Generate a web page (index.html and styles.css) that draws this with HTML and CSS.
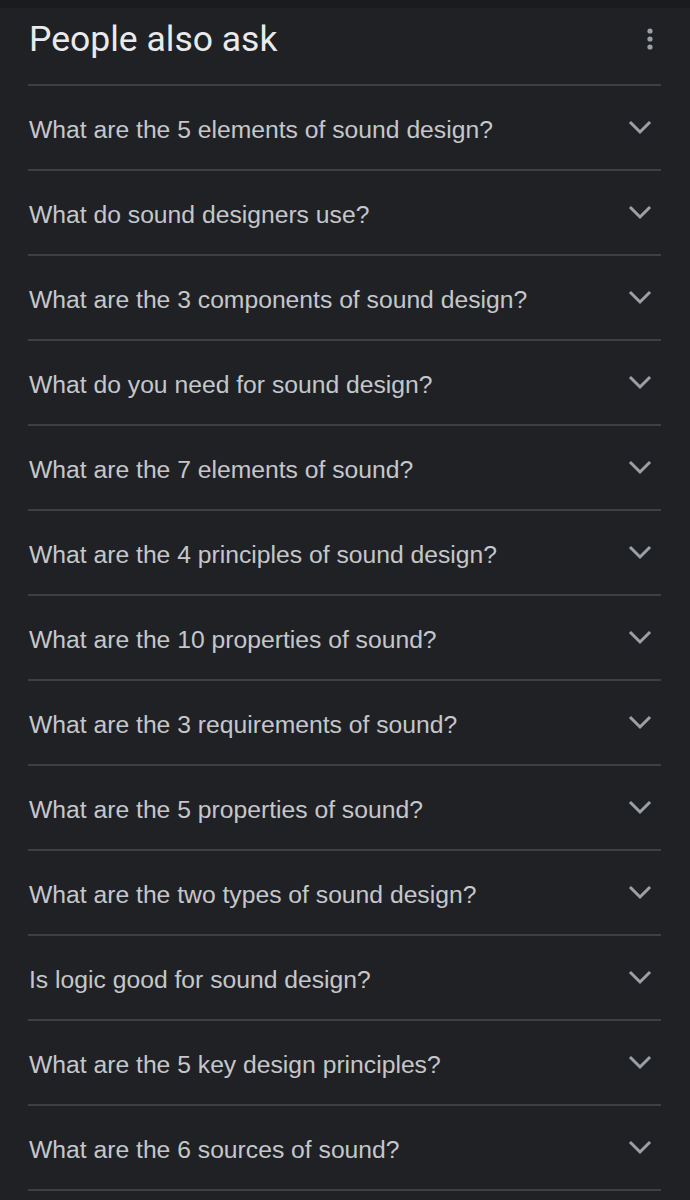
FILE: index.html
```html
<!DOCTYPE html>
<html lang="en">
<head>
    <meta charset="UTF-8">
    <meta name="viewport" content="width=device-width, initial-scale=1.0">
    <title>People also ask</title>
    <link rel="stylesheet" href="styles.css">
</head>
<body>
    <div class="top-strip"></div>
    <div class="paa">
        <div class="paa-header">
            <h2>People also ask</h2>
            <svg class="more" viewBox="0 0 8 24" fill="#9aa0a6">
                <circle cx="4" cy="4" r="2.6"></circle>
                <circle cx="4" cy="12" r="2.6"></circle>
                <circle cx="4" cy="20" r="2.6"></circle>
            </svg>
        </div>

        <div class="question"><span>What are the 5 elements of sound design?</span><svg class="chev" viewBox="0 0 24 16"><polyline points="3 3 12 12 21 3"></polyline></svg></div>
        <div class="question"><span>What do sound designers use?</span><svg class="chev" viewBox="0 0 24 16"><polyline points="3 3 12 12 21 3"></polyline></svg></div>
        <div class="question"><span>What are the 3 components of sound design?</span><svg class="chev" viewBox="0 0 24 16"><polyline points="3 3 12 12 21 3"></polyline></svg></div>
        <div class="question"><span>What do you need for sound design?</span><svg class="chev" viewBox="0 0 24 16"><polyline points="3 3 12 12 21 3"></polyline></svg></div>
        <div class="question"><span>What are the 7 elements of sound?</span><svg class="chev" viewBox="0 0 24 16"><polyline points="3 3 12 12 21 3"></polyline></svg></div>
        <div class="question"><span>What are the 4 principles of sound design?</span><svg class="chev" viewBox="0 0 24 16"><polyline points="3 3 12 12 21 3"></polyline></svg></div>
        <div class="question"><span>What are the 10 properties of sound?</span><svg class="chev" viewBox="0 0 24 16"><polyline points="3 3 12 12 21 3"></polyline></svg></div>
        <div class="question"><span>What are the 3 requirements of sound?</span><svg class="chev" viewBox="0 0 24 16"><polyline points="3 3 12 12 21 3"></polyline></svg></div>
        <div class="question"><span>What are the 5 properties of sound?</span><svg class="chev" viewBox="0 0 24 16"><polyline points="3 3 12 12 21 3"></polyline></svg></div>
        <div class="question"><span>What are the two types of sound design?</span><svg class="chev" viewBox="0 0 24 16"><polyline points="3 3 12 12 21 3"></polyline></svg></div>
        <div class="question"><span>Is logic good for sound design?</span><svg class="chev" viewBox="0 0 24 16"><polyline points="3 3 12 12 21 3"></polyline></svg></div>
        <div class="question"><span>What are the 5 key design principles?</span><svg class="chev" viewBox="0 0 24 16"><polyline points="3 3 12 12 21 3"></polyline></svg></div>
        <div class="question"><span>What are the 6 sources of sound?</span><svg class="chev" viewBox="0 0 24 16"><polyline points="3 3 12 12 21 3"></polyline></svg></div>
    </div>
</body>
</html>
```

FILE: styles.css
```css
/* Page */
body {
    margin: 0;
    padding: 0;
    background: #202124;
    font-family: 'Liberation Sans', Arial, sans-serif;
    color: #c4c7cc;
    overflow: hidden;
}

.top-strip {
    height: 8px;
    background: #1a1b1e;
}

.paa {
    padding: 0 29px 0 28px;
}

/* Header */
.paa-header {
    height: 76px;
    display: flex;
    align-items: center;
    justify-content: space-between;
    border-bottom: 2px solid #3c4043;
}

.paa-header h2 {
    margin: 0 0 14px 1px;
    font-family: Roboto, 'Liberation Sans', sans-serif;
    font-weight: 400;
    font-size: 35.5px;
    color: #e8eaed;
}

.more {
    width: 8px;
    height: 24px;
    margin: 0 7px 14px 0;
}

/* Questions */
.question {
    height: 83px;
    display: flex;
    align-items: center;
    justify-content: space-between;
    border-bottom: 2px solid #3c4043;
    font-size: 24.7px;
    padding-left: 1px;
}

.question span {
    margin-top: 4px;
}

.chev {
    width: 24px;
    height: 16px;
    margin-right: 9px;
    fill: none;
    stroke: #9aa0a6;
    stroke-width: 3;
    stroke-linecap: square;
}
```
